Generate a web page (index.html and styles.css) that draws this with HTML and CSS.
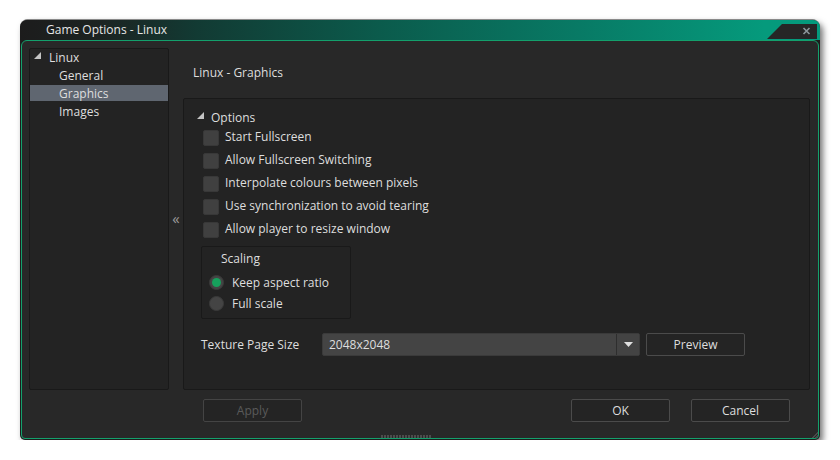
FILE: index.html
```html
<!DOCTYPE html>
<html>
<head>
<meta charset="utf-8">
<link rel="stylesheet" href="styles.css">
</head>
<body>
<div class="window">
  <div class="titlebar">
    <span class="title">Game Options - Linux</span>
    <svg class="close-tab" width="50" height="15" viewBox="0 0 50 15">
      <polygon points="0,15 15,0 50,0 50,15" fill="#262626"/>
      <path d="M36.5 4 L42.5 10 M42.5 4 L36.5 10" stroke="#8c979c" stroke-width="1.6"/>
    </svg>
  </div>
  <div class="body">
    <div class="main">
      <div class="tree">
        <div class="node root"><span class="tri"></span>Linux</div>
        <div class="node child">General</div>
        <div class="node child selected">Graphics</div>
        <div class="node child">Images</div>
      </div>
      <div class="splitter">«</div>
      <div class="content">
        <div class="header">Linux - Graphics</div>
        <div class="panel">
          <div class="section"><span class="tri"></span>Options</div>
          <div class="check-row"><span class="checkbox"></span>Start Fullscreen</div>
          <div class="check-row"><span class="checkbox"></span>Allow Fullscreen Switching</div>
          <div class="check-row"><span class="checkbox"></span>Interpolate colours between pixels</div>
          <div class="check-row"><span class="checkbox"></span>Use synchronization to avoid tearing</div>
          <div class="check-row"><span class="checkbox"></span>Allow player to resize window</div>
          <div class="group">
            <div class="group-title">Scaling</div>
            <div class="radio-row"><span class="radio checked"></span>Keep aspect ratio</div>
            <div class="radio-row"><span class="radio"></span>Full scale</div>
          </div>
          <div class="texture-row">
            <span class="texture-label">Texture Page Size</span>
            <div class="combo">
              <span class="combo-value">2048x2048</span>
              <span class="combo-arrow"><svg width="9" height="5" viewBox="0 0 9 5"><polygon points="0,0 9,0 4.5,5" fill="#e0e0e0"/></svg></span>
            </div>
            <button class="btn preview">Preview</button>
          </div>
        </div>
      </div>
    </div>
    <div class="footer">
      <button class="btn disabled">Apply</button>
      <span class="spacer"></span>
      <button class="btn">OK</button>
      <button class="btn">Cancel</button>
    </div>
    <div class="grip"></div>
    <div class="resize-grip"></div>
  </div>
</div>
</body>
</html>
```
FILE: styles.css
```css
html, body {
  margin: 0;
  padding: 0;
  background: #ffffff;
}
body {
  font-family: "Open Sans", "Noto Sans", sans-serif;
  font-size: 12px;
  color: #dedede;
}
.window {
  position: relative;
  margin: 19px 0 0 20px;
  width: 800px;
  height: 421px;
  box-sizing: border-box;
  background: #1d1d1d;
  border-radius: 8px 8px 5px 5px;
  box-shadow: 3px 4px 6px rgba(0,0,0,0.55);
  display: flex;
  flex-direction: column;
  padding: 0 1px 1px 1px;
  border-top: 1px solid #8a8a8a;
}
.titlebar {
  position: relative;
  height: 20px;
  flex: none;
  border-radius: 7px 7px 0 0;
  margin: 0 -1px;
  background: linear-gradient(90deg, #1c1c1c 0%, #1c2322 10%, #123a33 22%, #0b5b4c 45%, #087a65 70%, #059a7c 93%, #049a7c 100%);
  display: flex;
  align-items: center;
}
.title {
  padding-left: 26px;
  line-height: 20px;
  color: #e6e6e6;
}
.close-tab {
  position: absolute;
  right: 3px;
  top: 4px;
  display: block;
}
.body {
  position: relative;
  flex: 1;
  background: #282828;
  border: 1px solid #13a06c;
  border-radius: 6px 6px 4px 4px;
  display: flex;
  flex-direction: column;
  padding: 7px 8px 0 7px;
}
.main {
  flex: none;
  height: 342px;
  display: flex;
}
.tree {
  width: 140px;
  box-sizing: border-box;
  background: #232323;
  border: 1px solid #191919;
  border-radius: 2px;
}
.node {
  height: 18px;
  line-height: 18px;
  position: relative;
}
.node.root {
  padding-left: 19px;
}
.node.child {
  padding-left: 29px;
}
.node.selected {
  background: linear-gradient(#5f6670, #5f6670) 0 0 / 100% 16px no-repeat;
  line-height: 17px;
}
.tri {
  position: absolute;
  width: 0;
  height: 0;
  border-left: 7px solid transparent;
  border-bottom: 7px solid #c4c4c4;
}
.node.root .tri {
  left: 4px;
  top: 3px;
}
.splitter {
  width: 14px;
  flex: none;
  display: flex;
  align-items: center;
  justify-content: center;
  color: #9a9a9a;
  font-size: 15px;
  padding-bottom: 2px;
}
.content {
  flex: 1;
  display: flex;
  flex-direction: column;
}
.header {
  height: 50px;
  box-sizing: border-box;
  padding: 17px 0 0 10px;
  line-height: 16px;
  flex: none;
}
.panel {
  flex: 1;
  background: #232323;
  border: 1px solid #191919;
  border-radius: 2px;
  padding: 9px 0 0 17px;
}
.section {
  position: relative;
  height: 19px;
  line-height: 19px;
  padding-left: 10px;
}
.section .tri {
  left: -4px;
  top: 4px;
}
.check-row {
  height: 23px;
  box-sizing: border-box;
  display: flex;
  align-items: flex-start;
  padding: 2px 0 0 2px;
  line-height: 16px;
}
.checkbox {
  width: 16px;
  height: 16px;
  box-sizing: border-box;
  background: #404040;
  border: 1px solid #383838;
  border-radius: 2px;
  margin-right: 6px;
  margin-top: 1px;
}
.group {
  width: 150px;
  height: 73px;
  box-sizing: border-box;
  margin-top: 4px;
  border: 1px solid #191919;
  border-radius: 2px;
  padding: 1px 0 0 7px;
}
.group-title {
  height: 24px;
  line-height: 22px;
  padding-left: 12px;
}
.radio-row {
  height: 21px;
  display: flex;
  align-items: center;
}
.radio {
  width: 15px;
  height: 15px;
  box-sizing: border-box;
  border-radius: 50%;
  background: #444444;
  border: 1px solid #3a3a3a;
  margin-right: 8px;
  display: flex;
  align-items: center;
  justify-content: center;
}
.radio.checked::after {
  content: "";
  width: 9px;
  height: 9px;
  border-radius: 50%;
  background: #16a05c;
}
.texture-row {
  display: flex;
  align-items: center;
  margin-top: 14px;
  height: 23px;
}
.texture-label {
  width: 121px;
}
.combo {
  width: 318px;
  height: 23px;
  box-sizing: border-box;
  display: flex;
  background: #444444;
  border: 1px solid #3a3a3a;
  border-radius: 2px;
}
.combo-value {
  flex: 1;
  padding-left: 6px;
  line-height: 21px;
}
.combo-arrow {
  width: 22px;
  border-left: 1px solid #2e2e2e;
  background: #434343;
  display: flex;
  align-items: center;
  justify-content: center;
}
.btn {
  width: 99px;
  height: 23px;
  box-sizing: border-box;
  background: #242424;
  border: 1px solid #4b4b4b;
  border-radius: 2px;
  color: #dedede;
  font-family: inherit;
  font-size: 12px;
  padding: 0;
}
.preview {
  margin-left: 6px;
}
.btn.disabled {
  color: #5a5a5a;
  border-color: #444;
}
.footer {
  display: flex;
  padding: 9px 20px 0 174px;
  gap: 21px;
}
.spacer {
  flex: 1;
}
.grip {
  position: absolute;
  left: 359px;
  bottom: 0;
  width: 50px;
  height: 3px;
  background: repeating-linear-gradient(90deg, #4c4c4c 0 2px, transparent 2px 3px);
}
.resize-grip {
  position: absolute;
  right: 0;
  bottom: 0;
  width: 6px;
  height: 6px;
  background: linear-gradient(135deg, transparent 50%, #4a4a4a 50% 60%, transparent 60% 75%, #4a4a4a 75% 85%, transparent 85%);
}
```
